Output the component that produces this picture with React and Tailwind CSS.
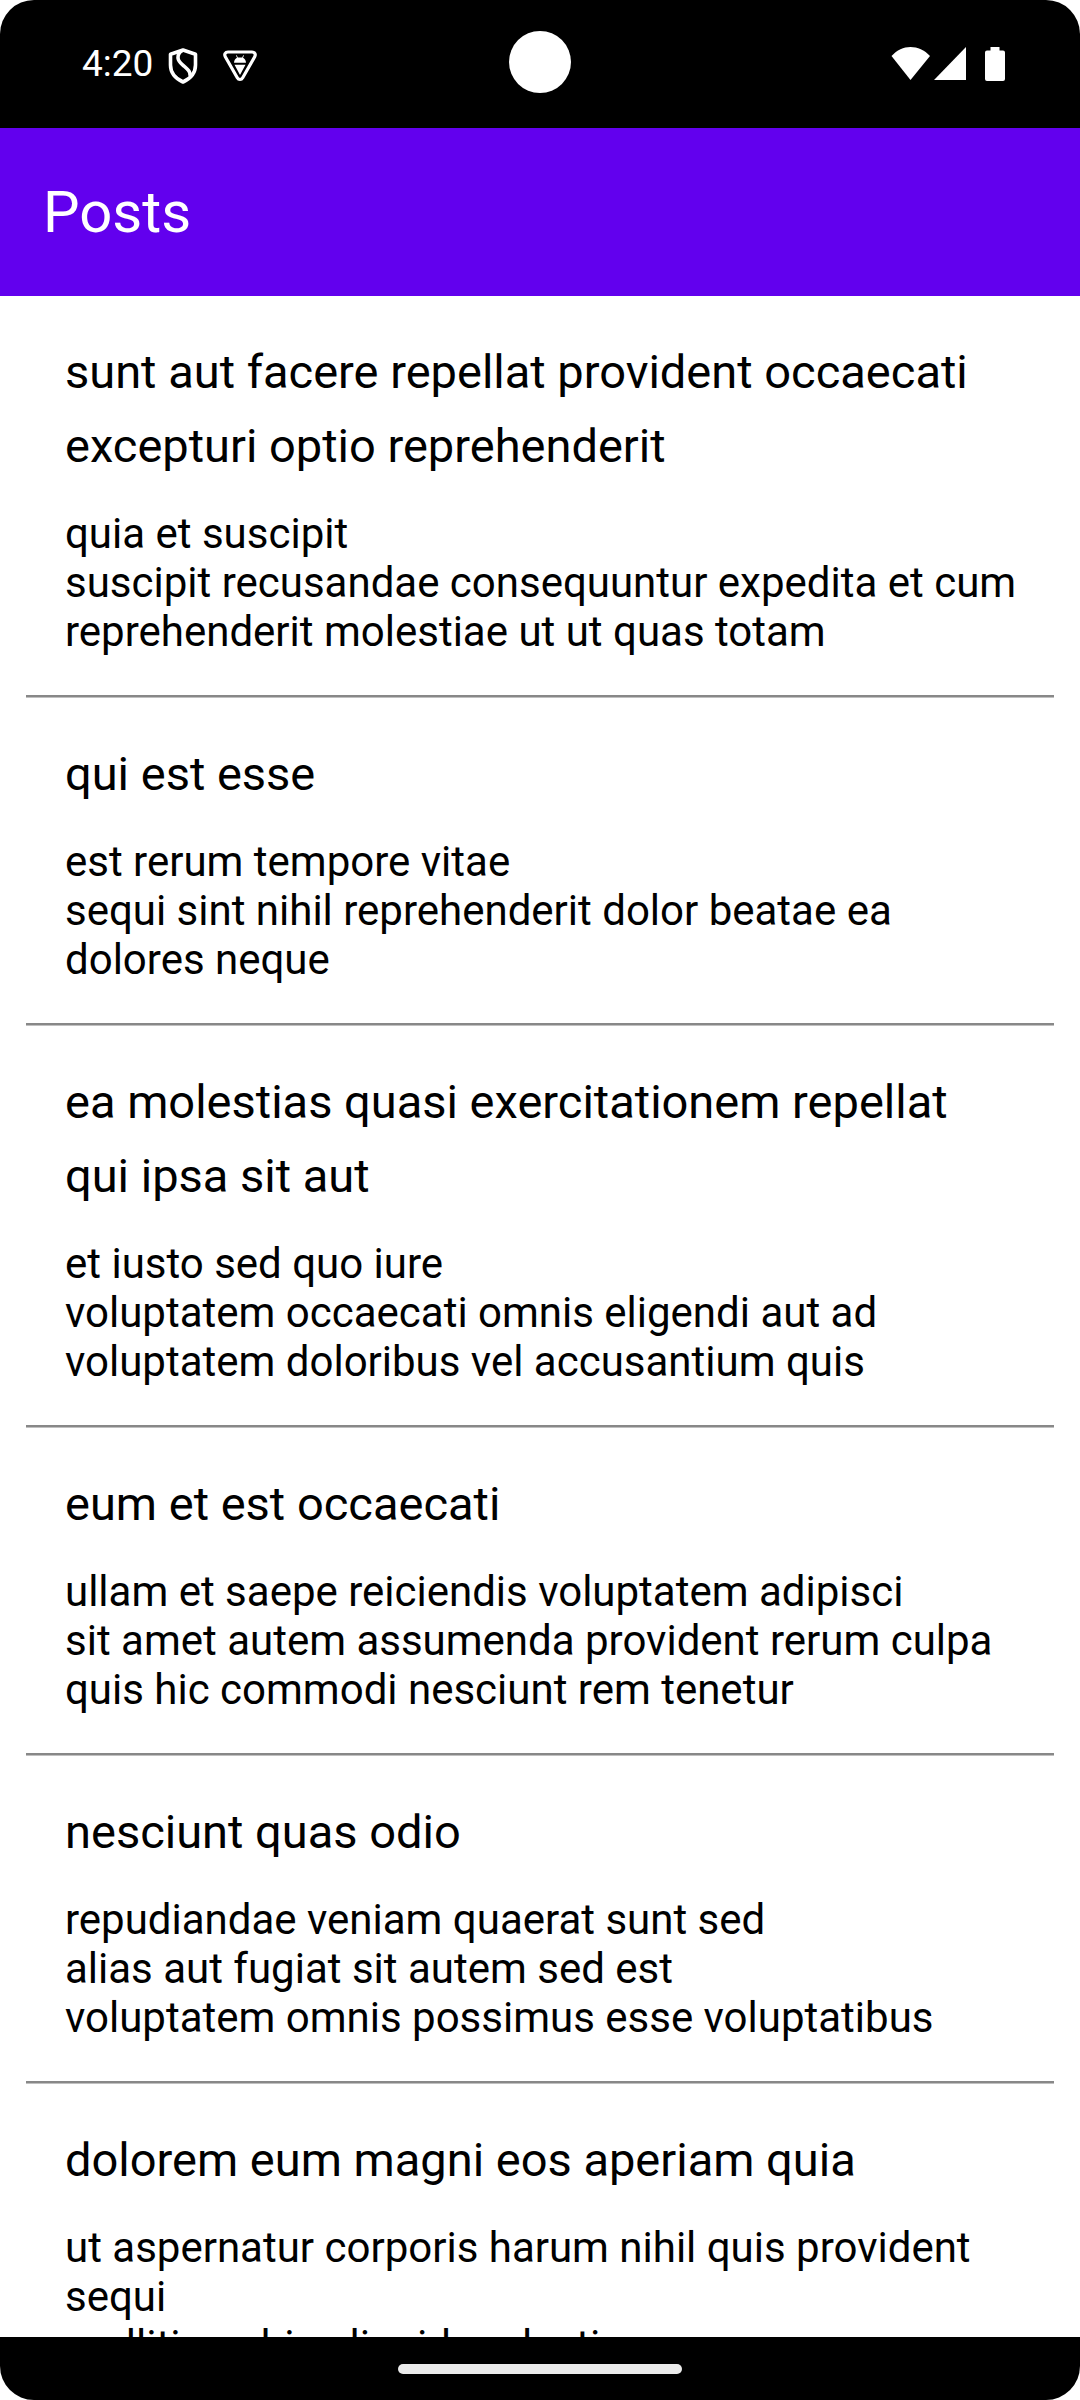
const posts = [
  {
    title: "sunt aut facere repellat provident occaecati\nexcepturi optio reprehenderit",
    body: "quia et suscipit\nsuscipit recusandae consequuntur expedita et cum\nreprehenderit molestiae ut ut quas totam",
  },
  {
    title: "qui est esse",
    body: "est rerum tempore vitae\nsequi sint nihil reprehenderit dolor beatae ea\ndolores neque",
  },
  {
    title: "ea molestias quasi exercitationem repellat\nqui ipsa sit aut",
    body: "et iusto sed quo iure\nvoluptatem occaecati omnis eligendi aut ad\nvoluptatem doloribus vel accusantium quis",
  },
  {
    title: "eum et est occaecati",
    body: "ullam et saepe reiciendis voluptatem adipisci\nsit amet autem assumenda provident rerum culpa\nquis hic commodi nesciunt rem tenetur",
  },
  {
    title: "nesciunt quas odio",
    body: "repudiandae veniam quaerat sunt sed\nalias aut fugiat sit autem sed est\nvoluptatem omnis possimus esse voluptatibus",
  },
  {
    title: "dolorem eum magni eos aperiam quia",
    body: "ut aspernatur corporis harum nihil quis provident\nsequi\nmollitia nobis aliquid molestiae",
  },
];

function ShieldIcon() {
  return (
    <svg width="30" height="36" viewBox="0 0 30 36" fill="none" stroke="white" strokeWidth="3.6" strokeLinejoin="round" aria-hidden="true">
      <path d="M15 2 27.500 6.200V17c0 7.600-4.600 13.400-12.500 17C7.100 30.400 2.500 24.600 2.500 17V6.200Z" />
      <path d="M14.500 2.500C10.500 4.500 9.800 7 10 10c.3 4 3.200 5.500 6.500 8.500 4 3.500 6 5.500 5.500 9.500" />
    </svg>
  );
}

function TriangleBugIcon() {
  return (
    <svg width="34" height="32" viewBox="0 0 34 32" fill="none" aria-hidden="true">
      <path d="M5 2h24c2.800 0 4 2.400 2.700 4.700L19.700 27.700c-1.300 2.300-4.100 2.300-5.400 0L2.300 6.700C1 4.400 2.200 2 5 2Z" stroke="white" strokeWidth="3.2" />
      <path d="M11 12.800c0-2.600 1.600-4.500 3-5.100l-1-2.100.8-.4 1 2.200h4.400l1-2.200.8.4-1 2.100c1.400.6 3 2.500 3 5.100ZM11.500 14.800h11L17 25Z" fill="white" />
    </svg>
  );
}

function StatusBar() {
  return (
    <div className="relative flex h-32 shrink-0 items-center justify-between bg-black pl-[82px] pr-[75px] text-white">
      <div className="flex items-center">
        <span className="text-[37px] leading-[44px]">4:20</span>
        <span className="ml-[15px] mt-1"><ShieldIcon /></span>
        <span className="ml-[25px] mt-1"><TriangleBugIcon /></span>
      </div>
      <div className="absolute left-1/2 top-[31px] size-[62px] -translate-x-1/2 rounded-full bg-white" />
      <div className="flex items-center">
        <svg width="40" height="34" viewBox="0 0 40 34" fill="white" aria-hidden="true">
          <path d="M.5 9C6 3 12.500 0 19.500 0s14 3 19.500 9L19.500 33Z" />
        </svg>
        <svg className="ml-[3px]" width="32" height="34" viewBox="0 0 32 34" fill="white" aria-hidden="true">
          <path d="M32 0v33H0Z" />
        </svg>
        <svg className="ml-[19px]" width="20" height="34" viewBox="0 0 20 34" fill="white" aria-hidden="true">
          <path d="M5.500 0h9v3.500H18a2 2 0 0 1 2 2V32a2 2 0 0 1-2 2H2a2 2 0 0 1-2-2V5.500a2 2 0 0 1 2-2h3.500Z" />
        </svg>
      </div>
    </div>
  );
}

function Post({ title, body }) {
  return (
    <li>
      <article className="py-[39px] pl-[65px] pr-[52px]">
        <h2 className="whitespace-pre-line text-[47px] leading-[74px]">{title}</h2>
        <p className="mt-[26px] whitespace-pre-line text-[42px] leading-[49px]">{body}</p>
      </article>
      <hr className="mx-[26px] border-b border-t-2 border-b-[#c0c0c0] border-t-[#888888]" />
    </li>
  );
}

export default function App() {
  return (
    <div className="bg-white">
      <div className="flex h-screen flex-col overflow-hidden rounded-[34px] bg-white font-['Roboto',sans-serif] text-black">
        <StatusBar />
        <header className="flex h-[168px] shrink-0 items-center bg-[#6200ee] px-[43px] text-white">
          <h1 className="text-[58px] leading-[68px]">Posts</h1>
        </header>
        <main className="min-h-0 flex-1 overflow-hidden">
          <ul>
            {posts.map((post) => (
              <Post key={post.title} title={post.title} body={post.body} />
            ))}
          </ul>
        </main>
        <footer className="flex h-[63px] shrink-0 items-center justify-center bg-black">
          <div className="h-[10px] w-[284px] rounded-full bg-[#ebebeb]" />
        </footer>
      </div>
    </div>
  );
}
